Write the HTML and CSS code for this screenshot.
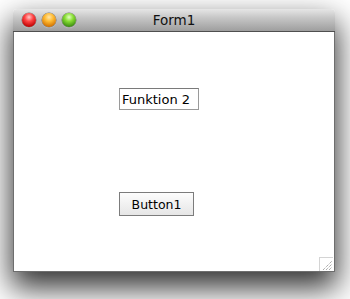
FILE: index.html
```html
<!DOCTYPE html>
<html>
<head>
    <title>Form1</title>
    <link rel="stylesheet" href="styles.css">
</head>
<body>
    <div class="desktop">
        <div class="window">
            <div class="titlebar">
                <div class="lights">
                    <span class="light close"></span>
                    <span class="light minimize"></span>
                    <span class="light zoom"></span>
                </div>
                <div class="title">Form1</div>
            </div>
            <div class="content">
                <input class="textfield" type="text" value="Funktion 2">
                <button class="button">Button1</button>
                <div class="grip">
                    <svg width="13" height="13" viewBox="0 0 13 13">
                        <path d="M3 12 L12 3 M6 12 L12 6 M9 12 L12 9" stroke="#8a8a8a" stroke-width="1" stroke-dasharray="1 1"/>
                    </svg>
                </div>
            </div>
        </div>
    </div>
</body>
</html>
```

FILE: styles.css
```css
html, body {
    margin: 0;
    background: #fff;
    font-family: "DejaVu Sans", Arial, sans-serif;
}
.desktop {
    height: 299px;
    padding: 9px 0 0 13px;
    box-sizing: border-box;
    overflow: hidden;
}
.window {
    width: 322px;
    box-shadow: 0 14px 30px 2px rgba(0, 0, 0, 0.8);
    border-radius: 4px 4px 0 0;
}
.titlebar {
    position: relative;
    height: 22px;
    border-radius: 4px 4px 0 0;
    background: linear-gradient(#e6e6e6, #c6c6c6 40%, #9e9e9e);
    border-bottom: 1px solid #4f4f4f;
    display: flex;
    align-items: center;
}
.lights {
    display: flex;
    gap: 6px;
    padding-left: 9px;
}
.light {
    width: 14px;
    height: 14px;
    border-radius: 50%;
    box-shadow: 0 0 0 0.5px rgba(0, 0, 0, 0.45), 0 1px 1px rgba(255, 255, 255, 0.5);
}
.close {
    background: radial-gradient(circle at 50% 30%, #ffc7c7 0, #f44 35%, #b00 80%, #d44 100%);
}
.minimize {
    background: radial-gradient(circle at 50% 30%, #ffe6a8 0, #fb3 35%, #d07000 80%, #e99500 100%);
}
.zoom {
    background: radial-gradient(circle at 50% 30%, #e2ffc2 0, #8d3 35%, #3a8a10 80%, #5a9 100%);
}
.title {
    position: absolute;
    left: 0;
    right: 0;
    text-align: center;
    font-size: 13.5px;
    color: #111;
}
.content {
    position: relative;
    height: 240px;
    background: #fff;
    border: 1px solid #6e6e6e;
    border-top: none;
    box-sizing: border-box;
    display: flex;
    flex-direction: column;
    align-items: flex-start;
    padding: 56px 0 0 105px;
}
.textfield {
    width: 80px;
    height: 22px;
    box-sizing: border-box;
    margin: 0;
    padding: 0 2px;
    border: 1px solid #9a9a9a;
    border-top-color: #7a7a7a;
    font-family: "DejaVu Sans", Arial, sans-serif;
    font-size: 13px;
    color: #000;
}
.button {
    margin-top: 82px;
    width: 75px;
    height: 24px;
    box-sizing: border-box;
    padding: 0;
    border: 1px solid #7c7c7c;
    background: linear-gradient(#fdfdfd, #f1f1f1 50%, #e6e6e6);
    font-family: "DejaVu Sans", Arial, sans-serif;
    font-size: 12.5px;
    color: #000;
}
.grip {
    position: absolute;
    right: 1px;
    bottom: 0;
    width: 14px;
    height: 14px;
    box-sizing: border-box;
    border: 1px solid #d4d4d4;
    border-right: none;
    border-bottom: none;
    display: flex;
}
```
